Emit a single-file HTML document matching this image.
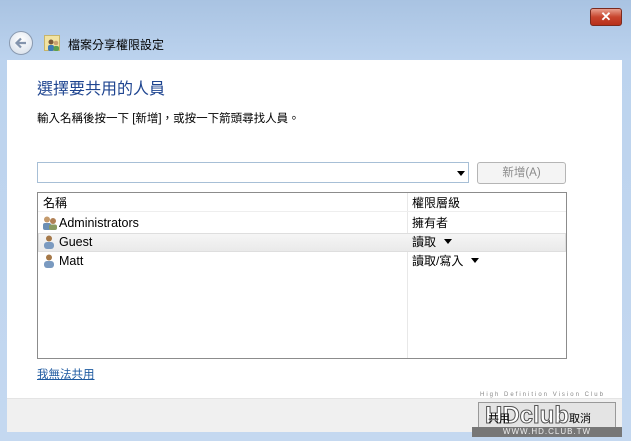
<!DOCTYPE html>
<html><head><meta charset="utf-8"><style>
*{margin:0;padding:0;box-sizing:border-box}
body{width:631px;height:441px;overflow:hidden;background:linear-gradient(#a9c3e2,#bcd3ee 60px,#c4d8f0);font-family:"Liberation Sans","Noto Sans CJK TC",sans-serif;position:relative;font-size:12px;color:#000}
.abs{position:absolute}
.close{left:590px;top:8px;width:32px;height:18px;border-radius:3px;background:linear-gradient(#e9a08f,#c8452e 50%,#b7301b);border:1px solid #7a2a1e;color:#fff;font-weight:bold;text-align:center;line-height:16px;font-size:13px}
.back{left:9px;top:31px;width:24px;height:24px;border-radius:50%;background:radial-gradient(circle at 50% 35%,#fff,#d3dce8);border:1px solid #8a9ab0}
.content{left:7px;top:60px;width:615px;height:372px;background:#fff}
.footer{left:7px;top:398px;width:615px;height:34px;background:#f0f0f0;border-top:1px solid #e4e4e4}
.h{left:37px;top:75px;font-size:16px;color:#1f4590}
.t{left:37px;top:110px;font-size:11.5px}
.input{left:37px;top:162px;width:432px;height:21px;border:1px solid #a7bfd6;background:#fff}
.btn{left:477px;top:162px;width:89px;height:22px;border:1px solid #b5b5b5;border-radius:3px;background:#f4f4f4;color:#8a8a8a;text-align:center;line-height:20px;font-size:11.5px}
.list{left:37px;top:192px;width:530px;height:167px;border:1px solid #8c8c8c;background:#fff}
.row{position:absolute;left:0;width:528px;height:18px;line-height:18px}
.sep{position:absolute;left:369px;top:0;width:1px;height:165px;background:#e8e8e8}
.link{left:37px;top:366px;color:#1e5aa0;text-decoration:underline;font-size:11.5px}
.tri{display:inline-block;width:0;height:0;border-left:4px solid transparent;border-right:4px solid transparent;border-top:5px solid #000;margin-left:8px;vertical-align:2px}
</style></head><body>
<div class="abs close">✕</div>
<div class="abs back"><svg width="22" height="22" viewBox="0 0 22 22"><path d="M16 11H7M11 6.5L6.5 11 11 15.5" stroke="#8394ad" stroke-width="2.2" fill="none"/></svg></div>
<div class="abs" style="left:44px;top:35px;width:16px;height:16px;background:#f1e3a2;border:1px solid #c8b56a"></div>
<svg class="abs" style="left:46px;top:39px" width="14" height="12"><circle cx="5" cy="3" r="2.5" fill="#7a5a3a"/><rect x="2" y="6" width="6" height="6" rx="2" fill="#3c7ab8"/><circle cx="10" cy="4" r="2.3" fill="#caa070"/><rect x="7.5" y="7" width="5.5" height="5" rx="2" fill="#5aa050"/></svg>
<div class="abs" style="left:68px;top:36px;font-size:12px">檔案分享權限設定</div>
<div class="abs content"></div>
<div class="abs footer"></div>
<div class="abs h">選擇要共用的人員</div>
<div class="abs t">輸入名稱後按一下 [新增]，或按一下箭頭尋找人員。</div>
<div class="abs input"><span class="tri" style="position:absolute;right:3px;top:8px;margin:0"></span></div>
<div class="abs btn">新增(A)</div>
<div class="abs list">
<div class="sep"></div>
<div class="row" style="top:1px;border-bottom:1px solid #eee"><span style="position:absolute;left:5px">名稱</span><span style="position:absolute;left:374px">權限層級</span></div>
<div class="row" style="top:21px"><svg style="position:absolute;left:4px;top:2px" width="16" height="14"><circle cx="5" cy="3.5" r="3" fill="#c49a6c"/><rect x="1" y="7" width="8" height="7" rx="2" fill="#6b8fb5"/><circle cx="11" cy="5" r="3" fill="#b08055"/><rect x="7" y="8.5" width="8" height="5.5" rx="2" fill="#8a9a60"/></svg><span style="position:absolute;left:21px;font-size:12.5px">Administrators</span><span style="position:absolute;left:374px">擁有者</span></div>
<div class="row" style="top:40px;background:linear-gradient(#f6f6f6,#e9e9e9);box-shadow:inset 0 0 0 1px #dedede;height:19px"><svg style="position:absolute;left:5px;top:2px" width="12" height="14"><circle cx="6" cy="3.5" r="3" fill="#a57848"/><rect x="1" y="7" width="10" height="7" rx="3" fill="#7a9ac0"/></svg><span style="position:absolute;left:21px;font-size:12.5px">Guest</span><span style="position:absolute;left:374px">讀取<span class="tri"></span></span></div>
<div class="row" style="top:59px"><svg style="position:absolute;left:5px;top:2px" width="12" height="14"><circle cx="6" cy="3.5" r="3" fill="#a57848"/><rect x="1" y="7" width="10" height="7" rx="3" fill="#7a9ac0"/></svg><span style="position:absolute;left:21px;font-size:12.5px">Matt</span><span style="position:absolute;left:374px">讀取/寫入<span class="tri"></span></span></div>
</div>
<div class="abs link">我無法共用</div>
<div class="abs" style="left:480px;top:392px;font-size:6px;letter-spacing:2px;color:#888;white-space:nowrap">High Definition Vision Club</div>
<div class="abs" style="left:478px;top:402px;width:138px;height:28px;border:1px solid #999;background:rgba(220,220,220,.6);font-size:24px;font-weight:bold;color:#fff;-webkit-text-stroke:1px #555;line-height:26px;padding-left:6px">HDclub</div>
<div class="abs" style="left:472px;top:427px;width:150px;height:10px;background:#777;color:#eee;font-size:8px;text-align:center;line-height:10px;letter-spacing:1px">WWW.HD.CLUB.TW</div>
<div class="abs" style="left:488px;top:410px;font-size:11px">共用</div>
<div class="abs" style="left:569px;top:410px;font-size:11px">取消</div>
</body></html>
